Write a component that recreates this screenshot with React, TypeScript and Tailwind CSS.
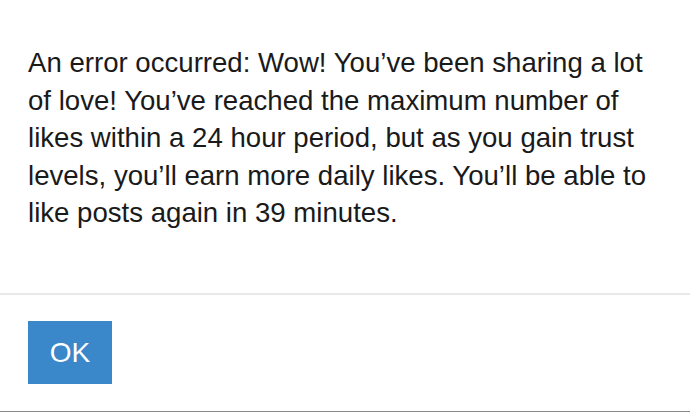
import React from "react";

const App: React.FC = () => {
  const message =
    "An error occurred: Wow! You\u2019ve been sharing a lot of love! You\u2019ve reached the maximum number of likes within a 24 hour period, but as you gain trust levels, you\u2019ll earn more daily likes. You\u2019ll be able to like posts again in 39 minutes.";

  return (
    <div className="w-[690px] h-[412px] bg-white flex flex-col font-['Liberation_Sans',Arial,sans-serif] overflow-hidden">
      <div className="h-[293px] pl-[28px] pt-[44px] pr-[30px]">
        <p className="text-[27.6px] leading-[37.5px] text-[#1a1a1a]">{message}</p>
      </div>
      <div className="h-[2px] bg-[#e9e9e9]" />
      <div className="flex-1 px-[28px] pt-[26px]">
        <button className="w-[84px] h-[63px] bg-[#3a87c9] text-white text-[28px] flex items-center justify-center">
          OK
        </button>
      </div>
      <div className="h-[1px] bg-[#8a8a8a]" />
    </div>
  );
};

export default App;
